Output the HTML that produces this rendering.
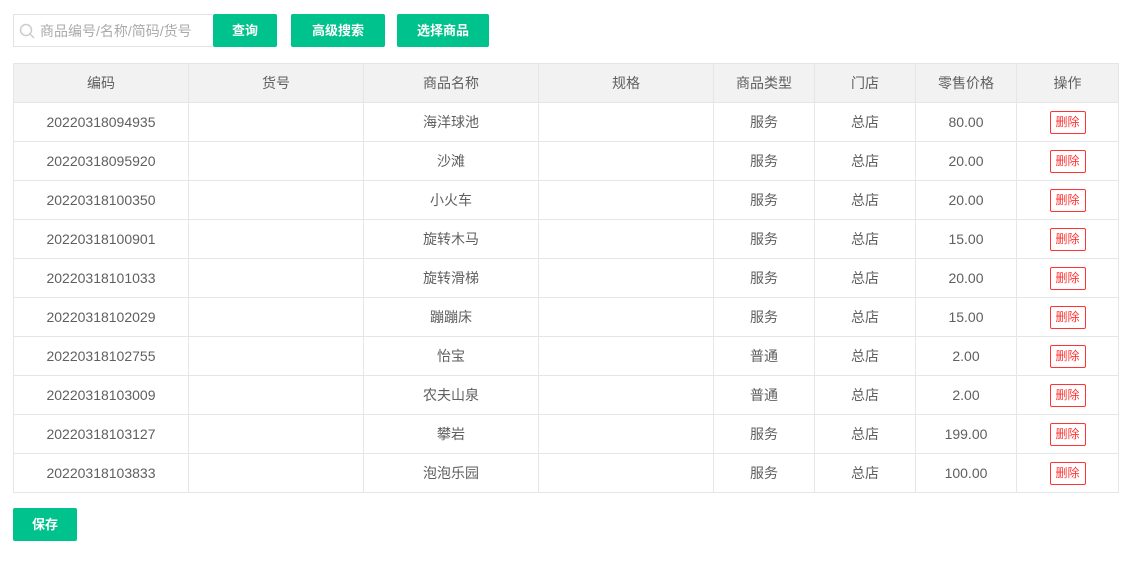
<!DOCTYPE html>
<html><head><meta charset="utf-8"><style>
body{margin:0;background:#fff;font-family:"Liberation Sans","Noto Sans CJK SC",sans-serif;color:#5f5f5f;font-size:14px;}
.inp{position:absolute;left:13px;top:14px;width:199px;height:31px;border:1px solid #e2e2e2;border-right:none;}
.inp span{position:absolute;left:26px;top:6px;color:#aaa;font-size:14px;}
.btn{position:absolute;top:14px;height:33px;background:#00c28c;color:#fff;font-size:13px;font-weight:bold;line-height:33px;text-align:center;border-radius:2px;}
table{position:absolute;left:13px;top:63px;border-collapse:collapse;width:1105px;table-layout:fixed;}
td,th{border:1px solid #e6e6e6;height:38px;text-align:center;font-size:14px;font-weight:normal;color:#5f5f5f;padding:0;}
th{background:#f2f2f2;}
.del{display:inline-block;border:1px solid #f33;color:#f33;font-size:12px;width:34px;height:21px;line-height:21px;border-radius:2px;}
</style></head><body>
<div class="inp"><svg style="position:absolute;left:5px;top:8px" width="16" height="16" viewBox="0 0 16 16"><circle cx="7" cy="7" r="5.5" fill="none" stroke="#ccc" stroke-width="1.5"/><line x1="11" y1="11" x2="15" y2="15" stroke="#ccc" stroke-width="1.5"/></svg><span>商品编号/名称/简码/货号</span></div>
<div class="btn" style="left:213px;width:64px">查询</div>
<div class="btn" style="left:291px;width:94px">高级搜索</div>
<div class="btn" style="left:397px;width:92px">选择商品</div>
<table>
<colgroup><col style="width:175px"><col style="width:175px"><col style="width:175px"><col style="width:175px"><col style="width:101px"><col style="width:101px"><col style="width:101px"><col style="width:102px"></colgroup>
<tr><th>编码</th><th>货号</th><th>商品名称</th><th>规格</th><th>商品类型</th><th>门店</th><th>零售价格</th><th>操作</th></tr>
<tr><td>20220318094935</td><td></td><td>海洋球池</td><td></td><td>服务</td><td>总店</td><td>80.00</td><td><span class="del">删除</span></td></tr>
<tr><td>20220318095920</td><td></td><td>沙滩</td><td></td><td>服务</td><td>总店</td><td>20.00</td><td><span class="del">删除</span></td></tr>
<tr><td>20220318100350</td><td></td><td>小火车</td><td></td><td>服务</td><td>总店</td><td>20.00</td><td><span class="del">删除</span></td></tr>
<tr><td>20220318100901</td><td></td><td>旋转木马</td><td></td><td>服务</td><td>总店</td><td>15.00</td><td><span class="del">删除</span></td></tr>
<tr><td>20220318101033</td><td></td><td>旋转滑梯</td><td></td><td>服务</td><td>总店</td><td>20.00</td><td><span class="del">删除</span></td></tr>
<tr><td>20220318102029</td><td></td><td>蹦蹦床</td><td></td><td>服务</td><td>总店</td><td>15.00</td><td><span class="del">删除</span></td></tr>
<tr><td>20220318102755</td><td></td><td>怡宝</td><td></td><td>普通</td><td>总店</td><td>2.00</td><td><span class="del">删除</span></td></tr>
<tr><td>20220318103009</td><td></td><td>农夫山泉</td><td></td><td>普通</td><td>总店</td><td>2.00</td><td><span class="del">删除</span></td></tr>
<tr><td>20220318103127</td><td></td><td>攀岩</td><td></td><td>服务</td><td>总店</td><td>199.00</td><td><span class="del">删除</span></td></tr>
<tr><td>20220318103833</td><td></td><td>泡泡乐园</td><td></td><td>服务</td><td>总店</td><td>100.00</td><td><span class="del">删除</span></td></tr>
</table>
<div class="btn" style="left:13px;top:508px;width:64px">保存</div>
</body></html>
